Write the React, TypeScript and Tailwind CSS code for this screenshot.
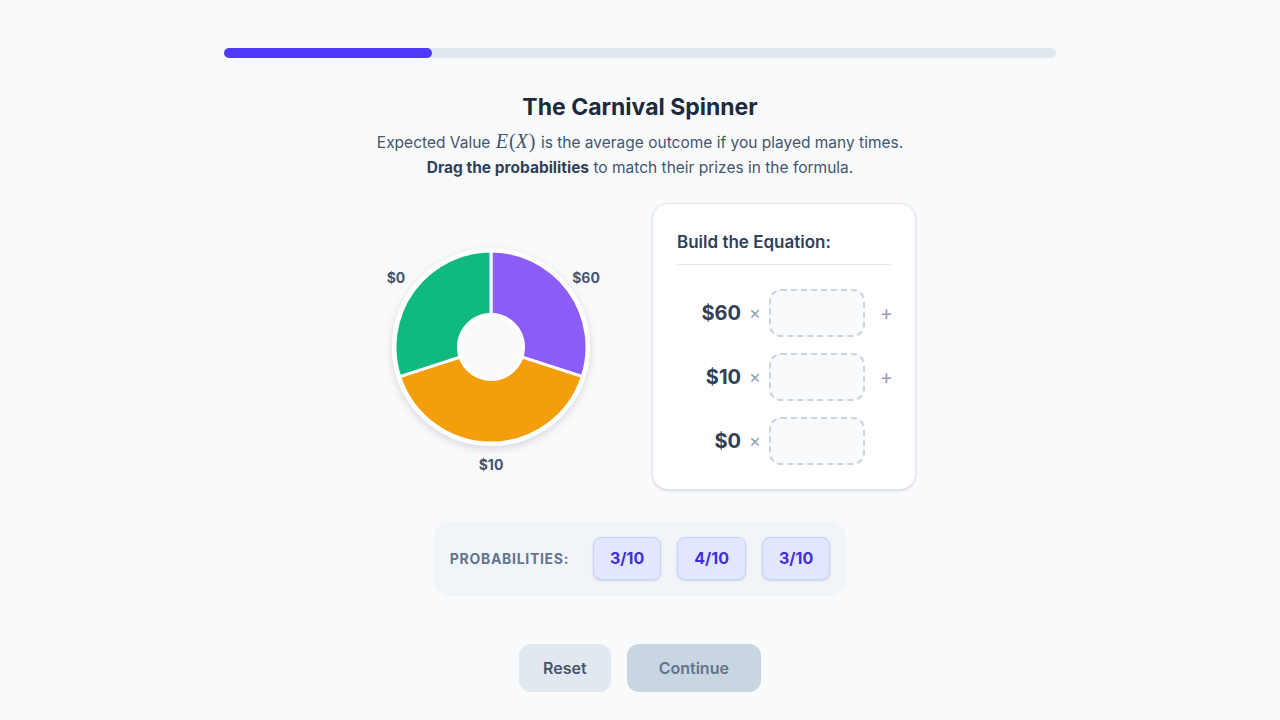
import React from "react";

const CX = 128;
const CY = 128;
const R_OUT = 96;
const R_IN = 32;

const segments = [
  { value: 0.3, color: "#8b5cf6", label: "$60" },
  { value: 0.4, color: "#f59e0b", label: "$10" },
  { value: 0.3, color: "#10b981", label: "$0" },
];

function pt(r: number, a: number) {
  const rad = (a * Math.PI) / 180;
  return [CX + r * Math.sin(rad), CY - r * Math.cos(rad)];
}

function arc(a0: number, a1: number) {
  const large = a1 - a0 > 180 ? 1 : 0;
  const [x0, y0] = pt(R_OUT, a0);
  const [x1, y1] = pt(R_OUT, a1);
  const [x2, y2] = pt(R_IN, a1);
  const [x3, y3] = pt(R_IN, a0);
  return `M${x0} ${y0} A${R_OUT} ${R_OUT} 0 ${large} 1 ${x1} ${y1} L${x2} ${y2} A${R_IN} ${R_IN} 0 ${large} 0 ${x3} ${y3} Z`;
}

function Spinner() {
  let start = 0;
  return (
    <svg width="256" height="256" viewBox="0 0 256 256" className="-ml-[1px] shrink-0">
      <defs>
        <filter id="sh" x="-20%" y="-20%" width="140%" height="140%">
          <feDropShadow dx="0" dy="3" stdDeviation="4" floodColor="#0f172a" floodOpacity="0.14" />
        </filter>
      </defs>
      <circle cx={CX} cy={CY} r={R_OUT + 3} fill="#ffffff" filter="url(#sh)" />
      {segments.map((s) => {
        const a0 = start;
        const a1 = start + s.value * 360;
        start = a1;
        return <path key={s.label} d={arc(a0, a1)} fill={s.color} stroke="#ffffff" strokeWidth="3" strokeLinejoin="round" />;
      })}
      <circle cx={CX} cy={CY} r={R_IN} fill="#f8fafc" stroke="#ffffff" strokeWidth="4" />
      <text x={CX + 95} y={CY - 70} textAnchor="middle" dominantBaseline="central" fill="#475569" fontSize="14" fontWeight="700" fontFamily="Inter, sans-serif">$60</text>
      <text x={CX - 95} y={CY - 70} textAnchor="middle" dominantBaseline="central" fill="#475569" fontSize="14" fontWeight="700" fontFamily="Inter, sans-serif">$0</text>
      <text x={CX} y={CY + 117} textAnchor="middle" dominantBaseline="central" fill="#475569" fontSize="14" fontWeight="700" fontFamily="Inter, sans-serif">$10</text>
    </svg>
  );
}

const rows = [
  { prize: "$60", plus: true },
  { prize: "$10", plus: true },
  { prize: "$0", plus: false },
];

export default function App() {
  return (
    <div className="min-h-screen bg-[#f8fafc] font-['Inter',sans-serif]">
      <div className="mx-auto w-[832px] pt-12">
        <div className="h-2.5 w-full rounded-full bg-slate-200">
          <div className="h-full w-1/4 rounded-full bg-indigo-600" />
        </div>

        <h1 className="mt-[33px] text-center text-[23px] font-bold leading-8 text-slate-800">The Carnival Spinner</h1>
        <p className="mt-[7px] text-center text-[15.5px] leading-[25px] text-slate-600">
          Expected Value{" "}
          <span className="mx-[1px] font-['Liberation_Serif',serif] text-[20px] leading-none">
            <span className="italic">E</span>
            <span className="ml-[1px]">(</span>
            <span className="italic">X</span>
            <span className="ml-[1px]">)</span>
          </span>{" "}
          is the average outcome if you played many times.
          <br />
          <span className="font-bold text-slate-700">Drag the probabilities</span> to match their prizes in the formula.
        </p>

        <div className="mt-[23px] flex items-center justify-center gap-[33px]">
          <Spinner />
          <div className="w-[264px] rounded-2xl border border-slate-200 bg-white p-6 shadow-sm">
            <h2 className="border-b border-slate-200 pb-2 text-[17px] font-semibold leading-7 text-slate-700">Build the Equation:</h2>
            <div className="mt-6 flex flex-col gap-4">
              {rows.map((r) => (
                <div key={r.prize} className="flex items-center">
                  <span className="w-16 text-right text-xl font-bold text-slate-700">{r.prize}</span>
                  <span className="ml-2 text-lg text-slate-400">×</span>
                  <div className="ml-2 h-12 w-24 rounded-xl border-2 border-dashed border-slate-300 bg-slate-50" />
                  <span className="-mr-0.5 flex-1 text-right text-xl text-slate-400">{r.plus ? "+" : ""}</span>
                </div>
              ))}
            </div>
          </div>
        </div>

        <div className="mt-[31px] flex justify-center">
          <div className="flex items-center gap-6 rounded-2xl bg-slate-100 p-4">
            <span className="text-sm font-bold uppercase tracking-wider text-slate-500">Probabilities:</span>
            <div className="flex gap-4">
              {["3/10", "4/10", "3/10"].map((p, i) => (
                <div key={i} className="rounded-lg border border-indigo-200 bg-indigo-100 px-4 py-2 text-base font-bold leading-[25px] text-indigo-700 shadow-sm">
                  {p}
                </div>
              ))}
            </div>
          </div>
        </div>

        <div className="mt-12 flex justify-center gap-4">
          <button className="rounded-xl bg-slate-200 px-6 py-3 text-base font-semibold text-slate-600">Reset</button>
          <button className="rounded-xl bg-slate-300 px-8 py-3 text-base font-semibold text-slate-500">Continue</button>
        </div>
      </div>
    </div>
  );
}
